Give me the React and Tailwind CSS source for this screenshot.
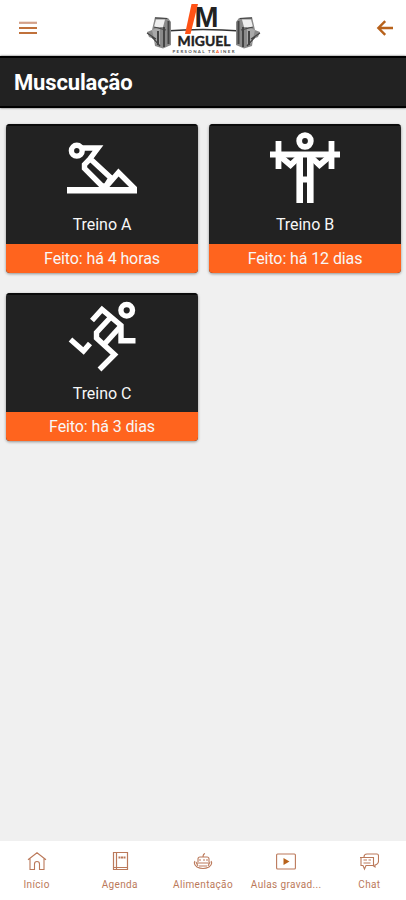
function SitUpIcon() {
  return (
    <svg viewBox="66 130 72 76" className="h-[76px] w-[72px]" fill="none" stroke="#fff" strokeWidth="5.4">
      <circle cx="76.8" cy="150.7" r="5.4" />
      <path d="M82 148H98L89 160L84.5 164.5V168.5L102 186H106L111 178L91 159.5" />
      <path d="M105 188L118.5 172.5L135 189" />
      <path d="M67 190.2H137" strokeWidth="6.4" />
    </svg>
  );
}

function BarbellIcon() {
  return (
    <svg viewBox="66 130 72 76" className="h-[76px] w-[72px]" fill="none" stroke="#fff" strokeWidth="5.8">
      <circle cx="102" cy="141" r="5.8" />
      <path d="M67 154.5H137M75.5 141V169M128.5 141V169" />
      <path d="M78 157L87.5 165L96 157M108 157L116.5 165L126 157" />
      <path d="M96.7 155V203M107.3 155V203" strokeWidth="6.6" />
      <path d="M97 179.5H107" strokeWidth="6" />
    </svg>
  );
}

function RunnerIcon() {
  return (
    <svg viewBox="66 299 72 76" className="h-[76px] w-[72px]" fill="none" stroke="#fff" strokeWidth="5.4">
      <circle cx="126.7" cy="310.3" r="5.8" />
      <path d="M92 320.5L102 309.5L121 325.5V340.7H135.5" />
      <path d="M110 318L96.5 332.5V338L114.5 354.5L99.5 369.5" />
      <path d="M120 327L105 343.5" />
      <path d="M70.5 339.5L83.5 351L90 343.5" />
    </svg>
  );
}

function Logo() {
  return (
    <svg viewBox="144 0 120 56" className="h-14 w-[120px]">
      <path d="M165 31Q203 28 241 31" fill="none" stroke="#333" strokeWidth="1.6" />
      <g id="weight">
        <path d="M155 17L168 18L171 22V45L163 48.5L155 46L154 39L149 37L147 32L152 30Z" fill="#8a8a8a" />
        <path d="M156 19.5H165L163 27H154Z" fill="#eee" />
        <path d="M152 30L160 27V45L155 43Z" fill="#aaa" />
        <path d="M164 27V47M168.5 21V44M158 31V45" stroke="#444" strokeWidth="2" />
        <path d="M154 27L166 30M147 33L156 39M155 18L167 18.5M152 37L160 46" stroke="#444" strokeWidth="1.2" />
      </g>
      <use href="#weight" transform="translate(407 0) scale(-1 1)" />
      <text x="194.5" y="26.9" fontSize="29.6" fontWeight="700" fill="#222" textLength="24" lengthAdjust="spacingAndGlyphs" className="font-['Liberation_Sans',sans-serif]">M</text>
      <path d="M191.5 4H198L190.5 34H185Z" fill="#ff5216" />
      <text x="177.5" y="46" fontSize="14" fontWeight="700" fill="#222" stroke="#222" strokeWidth=".4" textLength="53" lengthAdjust="spacingAndGlyphs" className="font-['Lato',sans-serif]">MIGUEL</text>
      <text x="172.5" y="52.7" fontSize="4.4" fontWeight="700" fill="#555" textLength="62" className="font-['Lato',sans-serif]">
        PERSONAL TR<tspan fill="#ff5216">A</tspan>INER
      </text>
    </svg>
  );
}

function WorkoutCard({ icon, title, done, height = "h-[120px]" }) {
  return (
    <div className="flex flex-col overflow-hidden rounded bg-[#222] text-center text-[#f7f7f7] shadow-[0_1px_3px_rgba(0,0,0,0.4)]">
      <div className={`flex flex-col items-center border-t-2 border-[#0b0b0b] pt-1 ${height}`}>
        {icon}
        <p className="mt-[7px] text-base leading-6 tracking-[-0.05px]">{title}</p>
      </div>
      <p className="h-[29px] bg-[#ff641e] text-base leading-[29px] tracking-[-0.1px]">{done}</p>
    </div>
  );
}

function NavIcon({ children }) {
  return (
    <svg viewBox="0 0 20 20" className="h-5 w-5" fill="none" stroke="#bb795a" strokeWidth="1.1">
      {children}
    </svg>
  );
}

function NavItem({ label, children }) {
  return (
    <div className="flex min-w-0 flex-1 flex-col items-center pt-[10px]">
      <NavIcon>{children}</NavIcon>
      <p className="mt-[6px] text-[10px] leading-4 tracking-[0.35px] whitespace-nowrap">{label}</p>
    </div>
  );
}

export default function App() {
  return (
    <div className="flex h-[900px] w-[406px] flex-col overflow-hidden bg-[#f0f0f0] font-['Roboto',sans-serif]">
      <header className="grid h-14 shrink-0 grid-cols-[125px_120px_130px] items-center bg-white pl-[19px]">
        <svg viewBox="0 0 18 14" className="h-[14px] w-[18px]">
          <path d="M0 1.8H18" stroke="#d3a18a" strokeWidth="2.2" />
          <path d="M0 7H18M0 12H18" stroke="#c0713b" strokeWidth="2" />
        </svg>
        <Logo />
        <svg viewBox="0 0 18 16" className="h-4 w-[18px] justify-self-end" fill="none" stroke="#b8621b" strokeWidth="2.4">
          <path d="M17 8H2.5M9.2 1.2L2.4 8L9.2 14.8" />
        </svg>
      </header>

      <div className="flex h-[52px] shrink-0 items-center border-y-2 border-black bg-[#222] px-[14px] shadow-[0_0_2px_rgba(0,0,0,0.7)]">
        <h1 className="text-[22px] font-bold tracking-[-0.15px] text-white">Musculação</h1>
      </div>

      <main className="grid flex-1 grid-cols-[192px_192px] content-start gap-x-[11px] gap-y-5 pt-4 pl-[6px]">
        <WorkoutCard icon={<SitUpIcon />} title="Treino A" done="Feito: há 4 horas" />
        <WorkoutCard icon={<BarbellIcon />} title="Treino B" done="Feito: há 12 dias" />
        <WorkoutCard icon={<RunnerIcon />} title="Treino C" done="Feito: há 3 dias" height="h-[119px]" />
      </main>

      <nav className="-mx-[5px] flex h-[59px] shrink-0 bg-white text-[#bb795a]">
        <NavItem label="Início">
          <path d="M1 8.7L10 1.8L19 8.7M3 7.5V18.5H7.5V13A2.5 2.5 0 0 1 12.5 13V18.5H17V7.5" />
        </NavItem>
        <NavItem label="Agenda">
          <path d="M3.5 1.5H17.5V18.5H3.5ZM6.5 1.5V18.5M3.5 16.5H17.5" strokeWidth="1.2" />
          <path d="M8.5 6.5H15.5" strokeWidth="2" strokeDasharray="2 .5" />
        </NavItem>
        <NavItem label="Alimentação">
          <path d="M10 6Q10 3 12 2.5M5 11V8Q5 6 7 6H14Q16 6 16 8V11M2 10Q0 13 4 16Q10 19 16 16Q20 13 18 10M4 12H16M6 9H8M10 9H12M13 9H15M3 11L5 15M17 11L15 15M6 15H14" />
        </NavItem>
        <NavItem label="Aulas gravad...">
          <rect x=".6" y="3" width="18.8" height="15" rx="1" />
          <path d="M7.5 7L13.5 10.5L7.5 14Z" fill="#b8621b" stroke="none" />
        </NavItem>
        <NavItem label="Chat">
          <path d="M5 6Q5 3 8 3H18Q19.5 3 19.5 5V10Q19.5 13 16 14V16L14 14.5" />
          <path d="M1 6.5H14.5V14.5H7L5.5 18L4 14.5H2V6.5" />
          <path d="M4.5 9H8M4.5 12H11.5M9.5 9H12" />
        </NavItem>
      </nav>
    </div>
  );
}
